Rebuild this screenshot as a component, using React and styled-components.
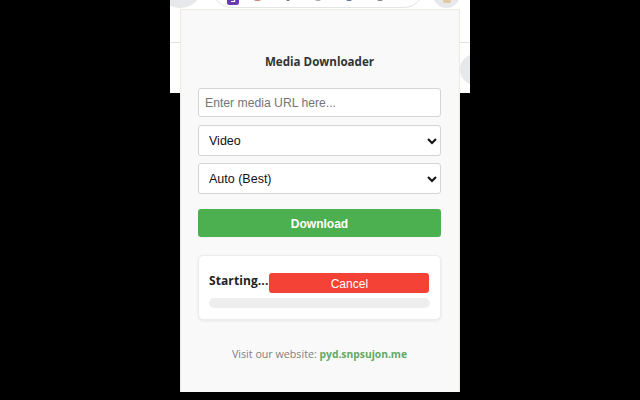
import styled, { createGlobalStyle } from 'styled-components'

const GlobalStyle = createGlobalStyle`
  html, body { margin: 0; padding: 0; background: #000; }
  * { box-sizing: border-box; }
`;

const Screen = styled.div`
  position: relative;
  width: 640px;
  height: 400px;
  background: #000;
  overflow: hidden;
  display: flex;
  justify-content: center;
`;

// the browser page showing behind the popup
const BrowserStrip = styled.div`
  width: 300px;
  height: 93px;
  background: #fff;
  overflow: hidden;
  display: flex;
  flex-direction: column;
`;
const Toolbar = styled.div`
  height: 43px;
  border-bottom: 1px solid #e3e3e3;
  display: flex;
  flex-direction: column;
`;
const ToolbarRow = styled.div`
  height: 8px;
  flex-shrink: 0;
  display: flex;
  align-items: flex-end;
  gap: 9px;
  margin-left: -13px;
`;
const Circle = styled.div`
  flex-shrink: 0;
  border-radius: 50%;
  background: #e7e8eb;
  width: ${p => p.$size}px;
  height: ${p => p.$size}px;
  display: flex;
  align-items: flex-end;
  justify-content: center;
  padding-bottom: 5px;
`;
const AvatarDot = styled.div`
  width: 8px;
  height: 4px;
  background: #e2c79f;
  border-radius: 2px;
`;
const AddressBar = styled.div`
  flex-shrink: 0;
  width: 212px;
  height: 40px;
  padding: 0 0 2px 14px;
  border: 1px solid #e4e4e4;
  border-radius: 20px;
  background: #fff;
  display: flex;
  align-items: flex-end;
  gap: 25px;
`;
const FavIcon = styled.div`
  flex-shrink: 0;
  width: ${p => p.$w}px;
  height: 8px;
  margin-bottom: ${p => p.$up}px;
  border-radius: 2px;
  background: ${p => p.$color};
`;
const PurpleIcon = styled.svg`
  flex-shrink: 0;
  width: 12px;
  height: 12px;
  margin-right: -10px;
`;
const PageRow = styled.div`
  flex: 1;
  display: flex;
  justify-content: flex-end;
  padding-top: 11px;
  margin-right: -21px;
`;

const Popup = styled.div`
  position: absolute;
  left: 180px;
  top: 9px;
  width: 280px;
  height: 383px;
  background: #f9f9f9;
  border: 1px solid #eee8e3;
  border-bottom: none;
  padding: 44px 18px 0 17px;
  display: flex;
  flex-direction: column;
`;
const Title = styled.h1`
  margin: 0 0 18px;
  height: 16px;
  font: 700 11.6px/16px "Open Sans", sans-serif;
  color: #333;
  text-align: center;
`;
const UrlInput = styled.input`
  width: 243px;
  height: 29px;
  margin-bottom: 8px;
  padding: 0 6px;
  background: #fff;
  border: 1px solid #d4d4d4;
  border-radius: 3px;
  font: 12.2px "Liberation Sans", sans-serif;
  color: #333;
  outline: none;
  &::placeholder { color: #757575; opacity: 1; }
`;
const SelectWrap = styled.div`
  position: relative;
  width: 243px;
  height: 31px;
  margin-bottom: 7px;
  padding: 0 10px;
  display: flex;
  align-items: center;
  background: #fff;
  border: 1px solid #d4d4d4;
  border-radius: 3px;
  font: 12.5px "Liberation Sans", sans-serif;
  color: #111;
`;
const Chevron = styled.svg`
  position: absolute;
  right: 3px;
  top: 11px;
  width: 10px;
  height: 8px;
`;
const DownloadButton = styled.button`
  width: 243px;
  height: 28px;
  margin-top: 8px;
  padding: 1px 0 0;
  border: none;
  border-radius: 3px;
  background: #4caf50;
  color: #fff;
  font: 700 12px "Liberation Sans", sans-serif;
`;
const ProgressCard = styled.div`
  width: 243px;
  height: 65px;
  margin-top: 18px;
  padding: 17px 11px 0 10px;
  background: #fff;
  border-radius: 5px;
  border: 1px solid #ececec;
  box-shadow: 0 1px 3px rgba(0, 0, 0, 0.08);
`;
const StatusRow = styled.div`
  display: flex;
  align-items: flex-start;
  height: 25px;
`;
const Status = styled.span`
  font: 700 12px/16px "Open Sans", sans-serif;
  color: #222;
  width: 60px;
  letter-spacing: 0.1px;
  white-space: nowrap;
`;
const CancelButton = styled.button`
  width: 161px;
  height: 20px;
  border: none;
  border-radius: 3px;
  background: #f44336;
  color: #fff;
  font: 12px "Liberation Sans", sans-serif;
  padding: 1px 0 0 1px;
`;
const ProgressTrack = styled.div`
  width: 221px;
  height: 10px;
  border-radius: 5px;
  background: #eeeeee;
`;
const Footer = styled.p`
  margin: 26px 0 0;
  font: 10.7px/16px "Open Sans", sans-serif;
  color: #808080;
  text-align: center;
`;
const SiteLink = styled.a`
  color: #62a966;
  font-size: 10.3px;
  font-weight: 700;
  text-decoration: none;
`;

const Select = ({ children }) => (
  <SelectWrap>
    {children}
    <Chevron viewBox="0 0 10 8">
      <path d="M1 2l4 4 4-4" fill="none" stroke="#111" strokeWidth="2" />
    </Chevron>
  </SelectWrap>
)

const App = () => {
  return (
    <Screen>
      <GlobalStyle />
      <BrowserStrip>
        <Toolbar>
          <ToolbarRow>
            <Circle $size={46} />
            <AddressBar>
              <PurpleIcon viewBox="0 0 12 12">
                <rect width="12" height="12" rx="2.5" fill="#6a3ab2" />
                <path d="M4 3h4M4 3v2.5h3.5v3H4" fill="none" stroke="#fff" strokeWidth="1.2" />
              </PurpleIcon>
              <FavIcon $w={7} $up={4} $color="#c98a8a" />
              <FavIcon $w={4} $up={4} $color="#666" />
              <FavIcon $w={6} $up={4} $color="#aab" />
              <FavIcon $w={6} $up={4} $color="#667a99" />
              <FavIcon $w={6} $up={4} $color="#888" />
            </AddressBar>
            <Circle $size={27}>
              <AvatarDot />
            </Circle>
          </ToolbarRow>
        </Toolbar>
        <PageRow>
          <Circle $size={31} />
        </PageRow>
      </BrowserStrip>
      <Popup>
        <Title>Media Downloader</Title>
        <UrlInput placeholder="Enter media URL here..." />
        <Select>Video</Select>
        <Select>Auto (Best)</Select>
        <DownloadButton>Download</DownloadButton>
        <ProgressCard>
          <StatusRow>
            <Status>Starting...</Status>
            <CancelButton>Cancel</CancelButton>
          </StatusRow>
          <ProgressTrack />
        </ProgressCard>
        <Footer>
          Visit our website: <SiteLink href="#">pyd.snpsujon.me</SiteLink>
        </Footer>
      </Popup>
    </Screen>
  )
}

export default App
